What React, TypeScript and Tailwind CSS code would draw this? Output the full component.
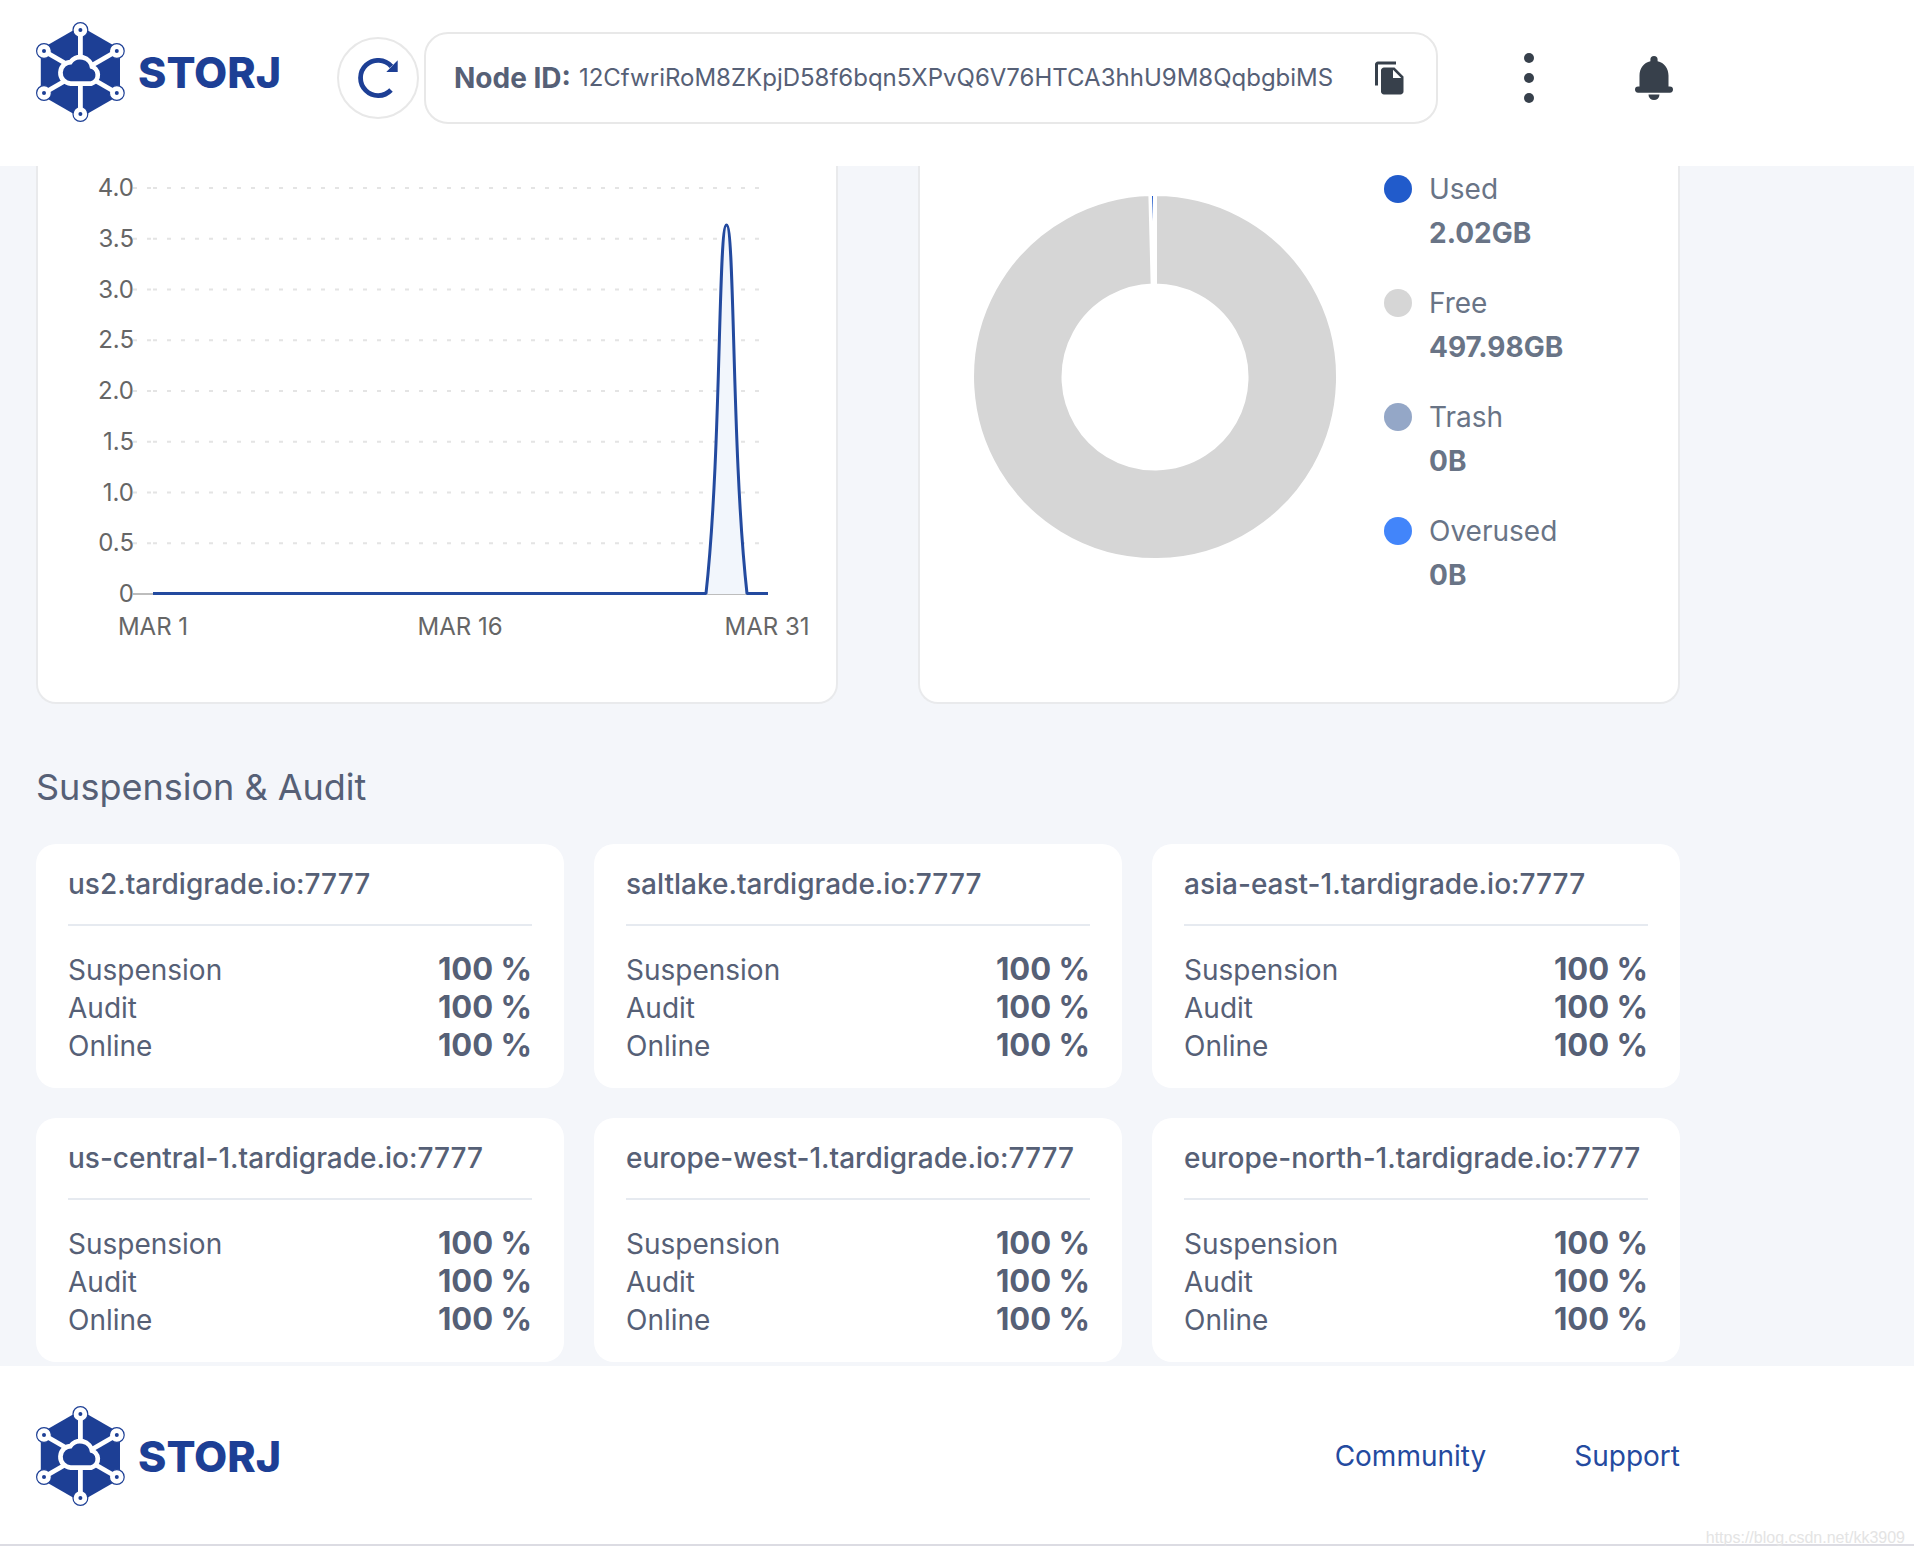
import { MdFileCopy } from "react-icons/md"

type Satellite = {
    name: string
    suspension: string
    audit: string
    online: string
}

const satellites: Satellite[] = [
    { name: 'us2.tardigrade.io:7777', suspension: '100 %', audit: '100 %', online: '100 %' },
    { name: 'saltlake.tardigrade.io:7777', suspension: '100 %', audit: '100 %', online: '100 %' },
    { name: 'asia-east-1.tardigrade.io:7777', suspension: '100 %', audit: '100 %', online: '100 %' },
    { name: 'us-central-1.tardigrade.io:7777', suspension: '100 %', audit: '100 %', online: '100 %' },
    { name: 'europe-west-1.tardigrade.io:7777', suspension: '100 %', audit: '100 %', online: '100 %' },
    { name: 'europe-north-1.tardigrade.io:7777', suspension: '100 %', audit: '100 %', online: '100 %' },
]

const diskSpace = [
    { label: 'Used', value: '2.02GB', dot: 'bg-[#215bcb]' },
    { label: 'Free', value: '497.98GB', dot: 'bg-[#d6d6d6]' },
    { label: 'Trash', value: '0B', dot: 'bg-[#94a7c7]' },
    { label: 'Overused', value: '0B', dot: 'bg-[#4285fa]' },
]

const ticks = ['0', '0.5', '1.0', '1.5', '2.0', '2.5', '3.0', '3.5', '4.0']

// centers of the six outer nodes of the logo
const logoNodes = [[44.4, 8], [80.8, 29], [80.8, 71], [44.4, 92], [8, 71], [8, 29]]

const Logo = () => (
    <a href="#" aria-label="Storj" className="flex shrink-0 items-center gap-[13px] text-[#1d3f95]">
        <svg width="89" height="100" viewBox="0 0 89 100" aria-hidden="true">
            <path d="M44.4 4.2L84 27.1V72.9L44.4 95.8L4.8 72.9V27.1Z" fill="currentColor" />
            {logoNodes.map(([x, y]) => (
                <g key={`${x}-${y}`}>
                    <circle cx={x} cy={y} r="7.4" fill="#fff" stroke="currentColor" strokeWidth="1.2" />
                    <line x1="44.4" y1="50" x2={x} y2={y} stroke="#fff" strokeWidth="4.8" />
                    <circle cx={x} cy={y} r="2" fill="currentColor" />
                </g>
            ))}
            <path
                d="M34.8 59.2A8.4 8.4 0 0 1 35.6 42.4A9.9 9.9 0 0 1 54 46.4A6.6 6.6 0 0 1 54.8 59.2Z"
                fill="currentColor"
                stroke="#fff"
                strokeWidth="9.4"
                strokeLinejoin="round"
                paintOrder="stroke"
            />
        </svg>
        <span className="text-[43px] leading-none font-extrabold">STORJ</span>
    </a>
)

const Header = () => (
    <header className="bg-white">
        <div className="flex w-full max-w-[1716px] items-start px-9 pt-[22px] pb-[42px]">
            <div className="w-[301px] shrink-0">
                <Logo />
            </div>
            <div className="mt-[10px] flex min-w-0 flex-1 items-center">
                <button
                    type="button"
                    aria-label="Refresh"
                    className="flex size-[82px] shrink-0 items-center justify-center rounded-full border-2 border-[#e8e8e8]"
                >
                    <svg width="40" height="40" viewBox="-20 -20 40 40" aria-hidden="true">
                        <path d="M13.4 -11.6A17.6 17.6 0 1 0 13 12" fill="none" stroke="#1d3f95" strokeWidth="4.8" />
                        <path d="M19.7 -17.7V-6H8.3Z" fill="#1d3f95" />
                    </svg>
                </button>
                <div className="ml-[5px] flex h-[92px] min-w-0 flex-1 items-center rounded-3xl border-2 border-[#e8e8e8] px-7 text-[#566076]">
                    <b className="shrink-0 text-[28px] font-bold">Node ID:</b>
                    <p className="ml-2 min-w-0 flex-1 truncate text-2xl">12CfwriRoM8ZKpjD58f6bqn5XPvQ6V76HTCA3hhU9M8QqbgbiMS</p>
                    <button type="button" aria-label="Copy node ID" className="shrink-0 text-[#37404b]">
                        <MdFileCopy size={36} />
                    </button>
                </div>
                <button type="button" aria-label="Options" className="ml-[66px] flex w-[50px] shrink-0 flex-col items-center gap-[10px]">
                    <span className="size-[10px] rounded-full bg-[#37404b]" />
                    <span className="size-[10px] rounded-full bg-[#37404b]" />
                    <span className="size-[10px] rounded-full bg-[#37404b]" />
                </button>
                <button type="button" aria-label="Notifications" className="ml-[74px] flex w-[52px] shrink-0 justify-center">
                    <svg width="38" height="44" viewBox="0 0 38 44" fill="#37404b" aria-hidden="true">
                        <path d="M19 0a3.6 3.6 0 0 1 3.6 3.6v1.6C29.2 6.6 33.5 12.4 33.5 19.5v11h1.4a3.1 3.1 0 0 1 0 6.2H3.1a3.1 3.1 0 0 1 0-6.2h1.4v-11C4.5 12.4 8.8 6.6 15.4 5.2V3.600A3.600 3.600 0 0 1 19 0Z" />
                        <path d="M13.5 38.500H24.500A5.500 5.500 0 0 1 13.500 38.500Z" />
                    </svg>
                </button>
            </div>
        </div>
    </header>
)

// month chart: 0 is drawn at y 428, each unit is 101.5 high
const BandwidthChart = () => (
    <svg viewBox="0 0 798 536" className="block w-full" role="img" aria-label="Bandwidth used this month">
        {ticks.map((tick, i) => {
            const y = 428 - i * 50.75
            return (
                <g key={tick}>
                    {i === 0 ? (
                        <line x1="95" y1={y} x2="721" y2={y} stroke="#bdbdbd" strokeWidth="2" />
                    ) : (
                        <>
                            <line x1="95" y1={y} x2="115" y2={y} stroke="#e4e4e4" strokeWidth="2" strokeDasharray="4 10" />
                            <line x1="115" y1={y} x2="722" y2={y} stroke="#e4e4e4" strokeWidth="2" strokeDasharray="4 10" />
                        </>
                    )}
                    <text x="96" y={y + 8} textAnchor="end" fontSize="24" fill="#666">{tick}</text>
                </g>
            )
        })}
        <path d="M668 428C683.500 288 680 59 688.500 59S693.500 288 709 428Z" fill="#f2f6fc" />
        <path
            d="M115 427.500H668C683.500 288 680 59 688.500 59S693.500 288 709 427.500H730"
            fill="none"
            stroke="#234a9f"
            strokeWidth="3"
            strokeLinejoin="bevel"
        />
        <g fontSize="24" fill="#666" textAnchor="middle">
            <text x="115" y="469">MAR 1</text>
            <text x="422" y="469">MAR 16</text>
            <text x="729" y="469">MAR 31</text>
        </g>
    </svg>
)

const DiskChart = () => (
    <svg width="366" height="366" viewBox="-183 -183 366 366" className="shrink-0" role="img" aria-label="Disk space">
        <path
            d="M0 -183A183 183 0 1 1 -4.650 -182.940L-2.320 -91.470A91.500 91.500 0 1 0 0 -91.500Z"
            fill="#d6d6d6"
            stroke="#fff"
            strokeWidth="4"
        />
        <path d="M-3 -181H-2V-156Z" fill="#215bcb" />
    </svg>
)

const SatelliteCard = ({ satellite }: { satellite: Satellite }) => {
    const rows = [
        ['Suspension', satellite.suspension],
        ['Audit', satellite.audit],
        ['Online', satellite.online],
    ]

    return (
        <article className="rounded-[20px] bg-white px-8 pt-[21px] pb-[23px]">
            <h3 className="truncate border-b-2 border-[#e6eaf0] pb-[21px] text-[28px] leading-[38px] font-medium">{satellite.name}</h3>
            <dl className="mt-[25px]">
                {rows.map(([label, value]) => (
                    <div key={label} className="flex h-[38px] items-baseline justify-between">
                        <dt className="text-[28px] leading-[38px]">{label}</dt>
                        <dd className="text-[31px] leading-[35px] font-bold">{value}</dd>
                    </div>
                ))}
            </dl>
        </article>
    )
}

export default function App() {
    return (
        <div className="relative flex min-h-screen flex-col bg-white font-['Inter',sans-serif]">
            <Header />

            <main className="bg-[#f4f6fa] text-[#566076]">
                <div className="w-full max-w-[1716px] px-9 pb-1">
                    {/* graficas, continúan por debajo del header */}
                    <section className="grid grid-cols-[802fr_762fr] gap-20">
                        <div className="rounded-b-[20px] border-2 border-t-0 border-[#e9eaec] bg-white">
                            <BandwidthChart />
                        </div>
                        <div className="flex items-start rounded-b-[20px] border-2 border-t-0 border-[#e9eaec] bg-white pl-[52px]">
                            <div className="mt-7">
                                <DiskChart />
                            </div>
                            <ul className="mt-[1px] ml-[46px] flex flex-col gap-[26px] text-[28px] leading-[44px] text-[#697486]">
                                {diskSpace.map((item) => (
                                    <li key={item.label} className="flex gap-[17px]">
                                        <span className={`mt-2 size-7 shrink-0 rounded-full ${item.dot}`} />
                                        <div>
                                            <p>{item.label}</p>
                                            <p className="font-bold">{item.value}</p>
                                        </div>
                                    </li>
                                ))}
                            </ul>
                        </div>
                    </section>

                    <h2 className="mt-15 mb-[34px] text-4xl leading-[46px]">Suspension &amp; Audit</h2>

                    <section className="grid grid-cols-3 gap-[30px]">
                        {satellites.map((satellite) => (
                            <SatelliteCard key={satellite.name} satellite={satellite} />
                        ))}
                    </section>
                </div>
            </main>

            <footer className="border-b-2 border-[#dcdce3] bg-white">
                <div className="flex w-full max-w-[1716px] items-center justify-between px-9 pt-10 pb-[38px]">
                    <Logo />
                    <nav className="flex gap-[88px] text-[28px] text-[#244a9f]">
                        <a href="#">Community</a>
                        <a href="#">Support</a>
                    </nav>
                </div>
            </footer>

            <span className="absolute right-[9px] bottom-2 font-['Liberation_Sans',sans-serif] text-base leading-5 text-[#e4e4e4]">
                https://blog.csdn.net/kk3909
            </span>
        </div>
    )
}
